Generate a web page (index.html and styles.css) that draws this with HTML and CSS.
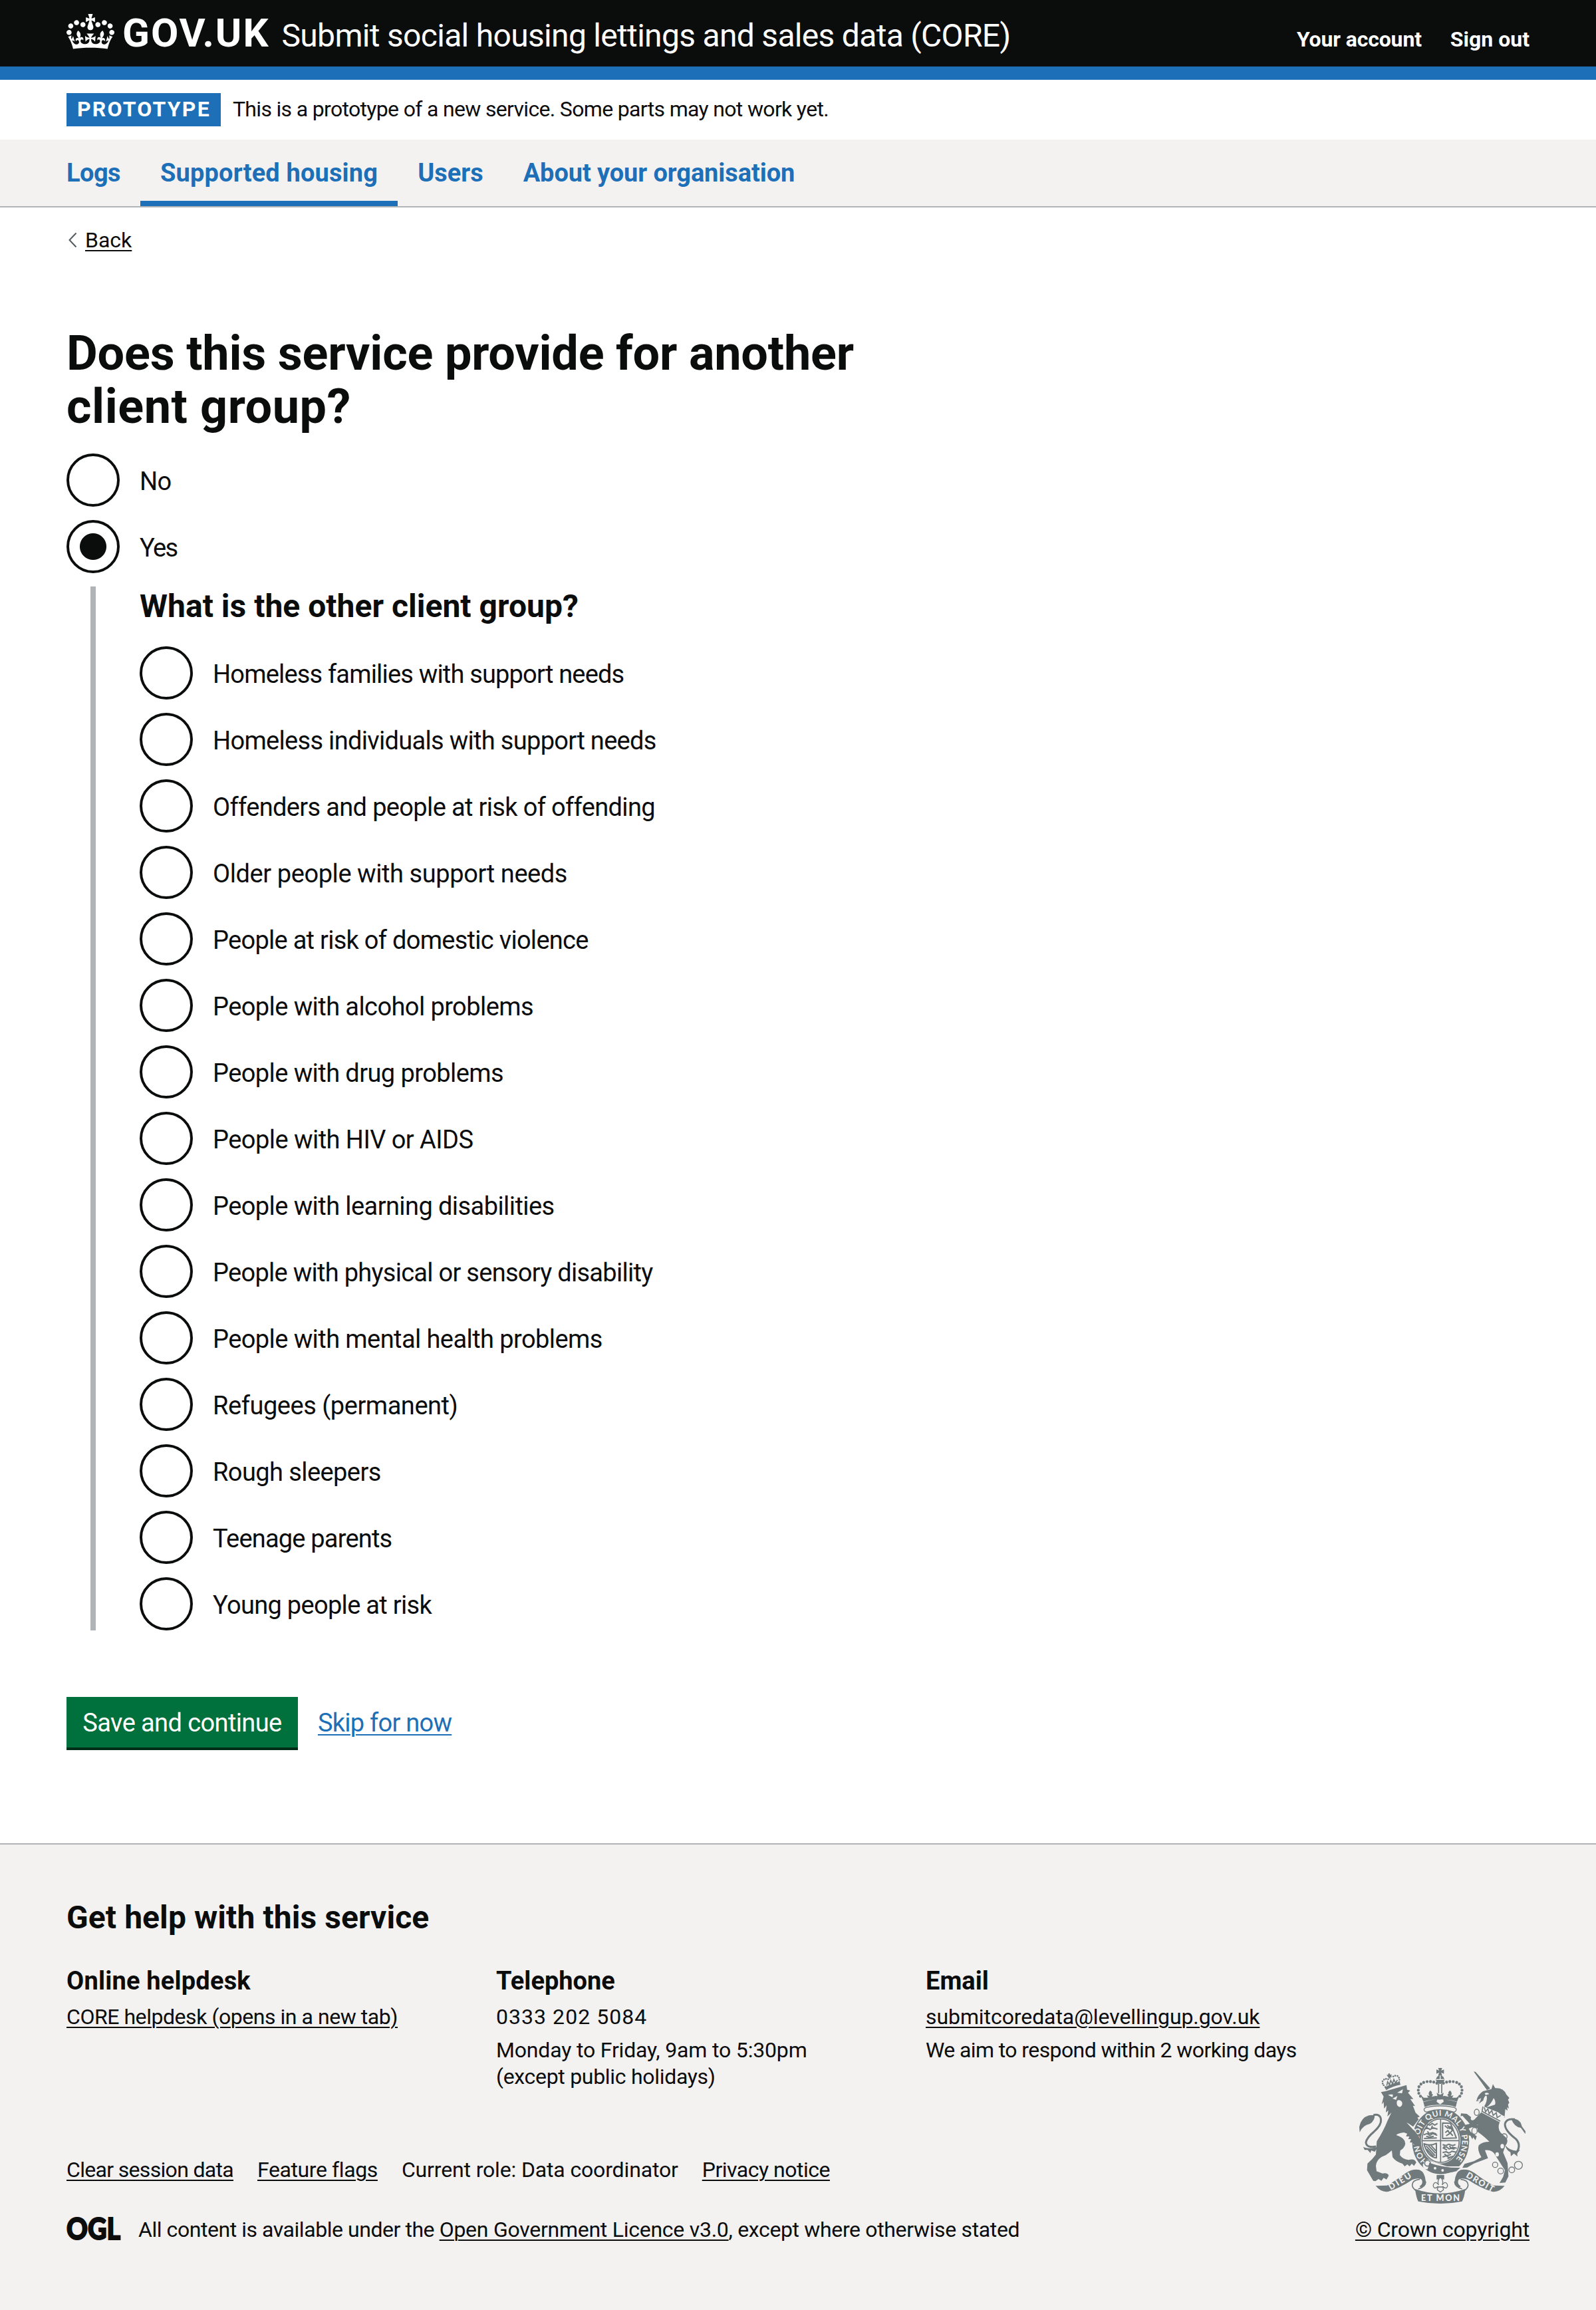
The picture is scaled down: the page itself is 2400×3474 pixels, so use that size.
FILE: index.html
```
<!DOCTYPE html>
<html lang="en">
<head>
<meta charset="utf-8">
<title>Does this service provide for another client group? - Submit social housing lettings and sales data (CORE)</title>
<link rel="stylesheet" href="styles.css">
</head>
<body>
<header class="header">
  <div class="header-inner">
    <svg class="crown" viewBox="0 0 132 97" aria-hidden="true"><path fill="currentColor" fill-rule="evenodd" d="M25 30.2c3.5 1.5 7.7-.2 9.1-3.7 1.5-3.6-.2-7.8-3.9-9.2-3.6-1.4-7.6.3-9.1 3.9-1.4 3.5.3 7.5 3.9 9zM9 39.5c3.6 1.5 7.8-.2 9.2-3.7 1.5-3.6-.2-7.8-3.9-9.1-3.6-1.5-7.6.2-9.1 3.8-1.4 3.5.3 7.5 3.8 9zM4.4 57.2c3.5 1.5 7.7-.2 9.1-3.8 1.5-3.6-.2-7.7-3.9-9.1-3.5-1.5-7.6.3-9.1 3.8-1.4 3.5.3 7.6 3.9 9.1zm38.3-21.4c3.5 1.5 7.7-.2 9.1-3.8 1.5-3.6-.2-7.7-3.9-9.1-3.6-1.5-7.6.3-9.1 3.8-1.3 3.6.4 7.7 3.9 9.1zm64.4-5.6c-3.6 1.5-7.8-.2-9.1-3.7-1.5-3.6.2-7.8 3.8-9.2 3.6-1.4 7.7.3 9.2 3.9 1.3 3.5-.4 7.5-3.9 9zm15.9 9.3c-3.6 1.5-7.7-.2-9.1-3.7-1.5-3.6.2-7.8 3.7-9.1 3.6-1.5 7.7.2 9.2 3.8 1.5 3.5-.3 7.5-3.8 9zm4.7 17.7c-3.6 1.5-7.8-.2-9.2-3.8-1.5-3.6.2-7.7 3.9-9.1 3.6-1.5 7.7.3 9.2 3.8 1.3 3.5-.4 7.6-3.9 9.1zM89.3 35.8c-3.6 1.5-7.8-.2-9.2-3.8-1.4-3.6.2-7.7 3.9-9.1 3.6-1.5 7.7.3 9.2 3.8 1.4 3.6-.3 7.7-3.9 9.1zM69.7 17.7l8.9 4.7V9.3l-8.9 2.8c-.2-.3-.5-.6-.9-.9L72.4 0H59.6l3.5 11.2c-.3.3-.6.5-.9.9l-8.8-2.8v13.1l8.8-4.7c.3.3.6.7.9.9l-5 15.4v.1c-.2.8-.4 1.6-.4 2.4 0 4.1 3.1 7.5 7 8.1h.2c.3 0 .7.1 1 .1.4 0 .7 0 1-.1h.2c4-.6 7.1-4.1 7.1-8.1 0-.8-.1-1.7-.4-2.4V34l-5.1-15.4c.4-.2.7-.6 1-.9zM66 92.8c16.9 0 32.8 1.1 47.1 3.2 4-16.9 8.9-26.7 14-33.5l-9.6-3.4c1 4.9 1.1 7.2 0 10.2-1.5-1.4-3-4.3-4.2-8.7L108.6 76c2.8-2 5-3.2 7.5-3.3-4.4 9.4-10 11.9-13.6 11.2-4.3-.8-6.3-4.6-5.6-7.9 1-4.7 5.7-5.9 8-.5 4.3-8.7-3-11.4-7.6-8.8 7.1-7.2 7.9-13.5 2.1-21.1-8 6.1-8.1 12.3-4.5 20.8-4.7-5.4-12.1-2.5-9.5 6.2 3.4-5.2 7.9-2 7.2 3.1-.6 4.3-6.4 7.8-13.5 7.2-10.3-.9-10.9-8-11.2-13.8 2.5-.5 7.1 1.8 11 7.3L80.2 60c-4.1 4.4-8 5.3-12.3 5.4 1.4-4.4 8-11.6 8-11.6H55.5s6.4 7.2 7.9 11.6c-4.2-.1-8-1-12.3-5.4l1.4 16.4c3.9-5.5 8.5-7.7 10.9-7.3-.3 5.8-.9 12.8-11.1 13.8-7.2.6-12.9-2.9-13.5-7.2-.7-5 3.8-8.3 7.1-3.1 2.7-8.7-4.6-11.6-9.4-6.2 3.7-8.5 3.6-14.7-4.6-20.8-5.8 7.6-5 13.9 2.2 21.1-4.7-2.6-11.9.1-7.7 8.8 2.3-5.5 7.1-4.2 8.1.5.7 3.3-1.3 7.1-5.7 7.9-3.5.7-9-1.8-13.5-11.2 2.5.1 4.7 1.3 7.5 3.3l-4.7-15.4c-1.2 4.4-2.7 7.2-4.3 8.7-1.1-3-.9-5.3 0-10.2l-9.5 3.4c5 6.9 9.9 16.7 14 33.5 14.8-2.1 30.8-3.2 47.7-3.2z"/></svg>
    <span class="logotype">GOV.UK</span>
    <span class="service-name">Submit social housing lettings and sales data (CORE)</span>
    <nav class="account"><a class="account-link">Your account</a><a>Sign out</a></nav>
  </div>
</header>

<div class="phase">
  <strong class="tag">PROTOTYPE</strong>
  <span class="phase-text">This is a prototype of a new service. Some parts may not work yet.</span>
</div>

<nav class="primary">
  <a class="nav-logs">Logs</a>
  <a class="nav-current">Supported housing</a>
  <a>Users</a>
  <a class="nav-about">About your organisation</a>
</nav>

<main class="main">
  <a class="back"><svg class="chevron" viewBox="0 0 14 24" aria-hidden="true"><path d="M12.5 1.5 2.5 12l10 10.5" fill="none" stroke="#505a5f" stroke-width="2"/></svg><span class="link">Back</span></a>
  <h1 class="title">Does this service provide for another <span class="title-end">client group?</span></h1>
  <div class="radios">
    <label class="radio"><i class="dot"></i><span class="text-no">No</span></label>
    <label class="radio"><i class="dot dot-on"></i><span class="text-yes">Yes</span></label>
  </div>
  <section class="conditional">
    <h2 class="heading">What is the other client group?</h2>
    <div class="radios groups">
      <label class="radio"><i class="dot"></i><span>Homeless families with support needs</span></label>
      <label class="radio"><i class="dot"></i><span>Homeless individuals with support needs</span></label>
      <label class="radio"><i class="dot"></i><span>Offenders and people at risk of offending</span></label>
      <label class="radio"><i class="dot"></i><span>Older people with support needs</span></label>
      <label class="radio"><i class="dot"></i><span>People at risk of domestic violence</span></label>
      <label class="radio"><i class="dot"></i><span>People with alcohol problems</span></label>
      <label class="radio"><i class="dot"></i><span>People with drug problems</span></label>
      <label class="radio"><i class="dot"></i><span>People with HIV or AIDS</span></label>
      <label class="radio"><i class="dot"></i><span>People with learning disabilities</span></label>
      <label class="radio"><i class="dot"></i><span>People with physical or sensory disability</span></label>
      <label class="radio"><i class="dot"></i><span>People with mental health problems</span></label>
      <label class="radio"><i class="dot"></i><span>Refugees (permanent)</span></label>
      <label class="radio"><i class="dot"></i><span>Rough sleepers</span></label>
      <label class="radio"><i class="dot"></i><span>Teenage parents</span></label>
      <label class="radio"><i class="dot"></i><span>Young people at risk</span></label>
    </div>
  </section>
  <div class="actions">
    <button class="button" type="button">Save and continue</button>
    <a class="link skip">Skip for now</a>
  </div>
</main>

<footer class="footer">
  <div class="footer-main">
    <h2 class="heading help">Get help with this service</h2>
    <div class="columns">
      <div>
        <h3 class="subheading online">Online helpdesk</h3>
        <p class="core"><a class="link">CORE helpdesk (opens in a new tab)</a></p>
      </div>
      <div>
        <h3 class="subheading">Telephone</h3>
        <p class="phone">0333 202 5084</p>
        <p class="hours">Monday to Friday, 9am to 5:30pm<br><span class="hours-note">(except public holidays)</span></p>
      </div>
      <div>
        <h3 class="subheading">Email</h3>
        <p class="email"><a class="link">submitcoredata@levellingup.gov.uk</a></p>
        <p class="respond">We aim to respond within 2 working days</p>
      </div>
    </div>
    <div class="meta-links">
      <a class="link meta-clear">Clear session data</a>
      <a class="link meta-flags">Feature flags</a>
      <span class="meta-role">Current role: Data coordinator</span>
      <a class="link meta-privacy">Privacy notice</a>
    </div>
    <div class="licence">
      <svg class="ogl" viewBox="0 0 84 40" aria-label="OGL"><text x="0" y="35" textLength="81" lengthAdjust="spacingAndGlyphs">OGL</text></svg>
      <p><span class="lic-a">All content is available under the </span><a class="link lic-b">Open Government Licence v3.0</a><span class="lic-c">, except where otherwise stated</span></p>
    </div>
  </div>
  <div class="copyright">
    <svg class="crest" viewBox="120 54 780 624" aria-hidden="true">
      <defs>
        <path id="garter" d="M443.4 483.6A97 114 0 1 1 554.6 483.6"/>
        <g id="ribbon">
          <path class="ink" d="M206 592l52-2q48-28 84-56 30-20 62-14 24 10 28 52 0 16-22 28l-6-6q18-12 10-30-12-10-42 0-60 40-110 54-32 4-56-26z"/>
          <path class="line" d="M405 562q-34 4-34 26 0 14 20 28M432 572q0 24-34 34"/>
        </g>
        <g id="crown-half">
          <path class="beads" d="M482 129q-20-10-46-7-28 4-36 26-6 24 10 42"/>
          <path class="ink" d="M499 182l-18-10 5 20-5 20 18 14zM452 162q-12 12-3 24l-12-2 6 10-20 0-14-12 12 30q36-10 78-10v-12l-22-4-18 4 6-10-6-4q4-8-7-14zM421 214q36-12 78-12v24q-42 0-72 10z"/>
        </g>
      </defs>

      <!-- Royal crown -->
      <path class="ink" d="M488 60h18l-4 12 12-5v19l-12-5 4 14h-18l4-14-12 5V67l12 5z"/>
      <circle class="ink" cx="497" cy="113" r="19"/>
      <path class="pale-line" d="M480 112h34M497 94v17"/>
      <path class="line" d="M490 132v42M504 132v42"/>
      <use href="#crown-half"/><use href="#crown-half" transform="matrix(-1 0 0 1 994 0)"/>

      <!-- Garter and shield -->
      <ellipse class="ink" cx="499" cy="391" rx="129" ry="148"/>
      <path class="cushion" d="M434 238q63-14 126 0 16 6 6 18-4 4-12 2-57-20-114 0-8 2-12-2-10-12 6-18z"/>
      <ellipse class="pale" cx="499" cy="388" rx="89" ry="103"/>
      <ellipse class="line" cx="499" cy="388" rx="84" ry="98"/>
      <path class="line" d="M499 290v196M415 388h168"/>
      <g class="charge">
        <path d="M435 312l16 6 10-8 12 8 12-8M425 338l14-8 12 8 14-8 20 6M422 362l16-6 12 8 14-8 20 8M424 378l58-2M438 322l-6 10 16 2M462 320l-4 12 18 0M440 346l6 10 18-4 16 6M434 368l14 4 20-4"/>
        <path d="M508 308l36 2 26 66-62 2zM518 320l14 12 10-8 10 18-10 10 12 14M520 352l12-10 8 14-16 10M530 318l12 18"/>
        <path d="M508 406l16 4 12-6 16 6 14-4M508 422l18-6 12 10 14-8 20 4M508 442l16-4 12 6 14-8 20 4M508 462l16-6 12 8 22-6M516 412l-4 10 16 8M540 410l4 12 18 4M516 448l10 8 20-6M530 470l14-6"/>
        <path d="M424 402q26 12 56-2v66q-36-4-54-56zM434 412l40 44M444 410l32 34M456 410l22 24M436 426l32 34"/>
      </g>
      <text class="motto ring"><textPath href="#garter" textLength="525">HONI SOIT QUI MAL Y PENSE</textPath></text>
      <path class="pale" d="M424 488q16-24 30-8l74 24 74 0-32 26-142-14q-16-12-4-28z"/>
      <path class="ink" d="M448 488q70 24 140 22l-18 16q-60 20-130-6z"/>
      <circle class="line" cx="440" cy="490" r="13"/>
      <circle class="pale" cx="474" cy="512" r="6"/><circle class="pale" cx="508" cy="522" r="6"/>

      <!-- Lion -->
      <path class="ink" d="M250 165l95-28 3 21 14 4-10 10 24 28-14 0 22 32-10-2 12 32 19 18-11 4 6 8-25 33-30-20 27 30q36 32 38 66l-7 15-10-10-10 5-10-15-13 0 6-15-13 0 5-12-15 0 5-13-15-5q-30 4-34 12 30 10 38 26 10 24-20 44l-2 20q14 20 40 22 28-8 34 12l-10 15-10-10-10 12-10-9-12 9-10-12q-32-10-45-30l-3-30q-14 12-28 22-40 12-44 48l3 24 27 10q24-4 28 10l-10 17-13-7-10 13-13-8-14 10-10-2-28-48 2-30q24-20 38-40l4-60q32-50 48-92l18-38-18 18 4-28-11 10 3-32-11 15-2-30-9 10 9-35-12-20z"/>
      <path class="pale" d="M303 208q12-8 22 6 4 18-10 22-14-2-14-20zM303 172l26-16-4 18zM262 182q10-4 22-2l-2 12zM282 198l22-12-6 18zM348 308q30 14 42 40l-10-6q-12-20-32-34z"/>
      <path class="ink" d="M246 148q34-20 68-26l4 14q-34 6-64 24zM260 98l-5-7 7 1 0-6 8-2 1 7 8-2-3 8 4 4-8 1 1 8-7-4z"/>
      <path class="beads small" d="M250 146q-18-16-12-28 10-14 28-6M312 124q4-20-8-28-16-4-24 8"/>
      <path class="line" d="M256 140l4-18 8 14 6-20 8 16 6-20 8 16 8-14"/>
      <path class="line tail" d="M208 414q-44 8-46-18 4-22 36-48 34-30 32-54-2-28-34-22"/>
      <path class="ink" d="M134 350l-2-24q8-42 44-52l26-2q0 26-22 40-34 8-46 38zM150 416q20 12 66 0l-14 22-16-6-4 12-12-14-14 0z"/>

      <!-- Unicorn -->
      <path class="ink" d="M648 76l9 2 66 74-15 8zM662 205q3-22 28-40l38-10 7-22 10 18q38-2 50 28l14 16-6 8 6 14-6 8 4 18-8-6 2 16-10-8-4 40-10-8-16-16-66-26q16-26 12-48-8-8-16 20l-20 14 8-14-20 4z"/>
      <path class="pale" d="M698 174q14-6 20 4l-16 4zM738 196q12 16 6 30l-38 12q22-16 32-42zM664 206l18-10-4 12z"/>
      <path class="ink" d="M684 258l82 44q-12 30 4 50l25 23q12 16-4 36l-10 30 20 48 4 60-14 28-26 2 16-28 8-30-44-68q-12-26-46-22l14 36-64 24-30 18-22 2 10-18 42-12 34-18q-20-32-12-54 16-16 48-16-20-22-54-46l2-32-30 4-40-44-8 4 2-14 26 2 34 26z"/>
      <path class="ink" d="M604 318l36-8 32 8-2 16-30-6-14 6 8 14 28 20-6 18-10-14-4 10-8-16-14-4-4-16z"/>
      <path class="pale" d="M690 232l98 46-16 30-90-48z"/>
      <path class="line" d="M690 234l-4 22 82 44M696 238l6 20 10-14 6 22 12-14 6 22 14-12 4 22 16-10"/>
      <path class="line tail" d="M838 448q28-40 0-68-54-42-48-70 8-24 44-18"/>
      <path class="ink" d="M818 290q40-4 48 34l16 22-1 12-20-28q-30-4-43-40zM790 408q30 34 68 22l-14 14 2 16-16-14-14 12-2-18q-18-8-24-32z"/>
      <g class="chain">
        <ellipse cx="662" cy="260" rx="11" ry="14"/><ellipse cx="652" cy="344" rx="12" ry="15"/><circle cx="786" cy="370" r="13"/><circle cx="745" cy="497" r="12"/><circle cx="770" cy="525" r="13"/><circle cx="820" cy="520" r="13"/><circle cx="850" cy="499" r="18"/>
      </g>
      <ellipse class="pale" cx="777" cy="413" rx="8" ry="10"/><ellipse class="pale" cx="754" cy="450" rx="8" ry="10"/><ellipse class="pale" cx="643" cy="288" rx="8" ry="8"/>

      <!-- Motto scroll -->
      <use href="#ribbon"/><use href="#ribbon" transform="matrix(-1 0 0 1 994 0)"/>
      <path class="ink" d="M384 606q113 40 226 0-2 32-14 56-99 20-198 0-10-20-14-56z"/>
      <text class="motto" x="274" y="611" transform="rotate(-31 274 611)" textLength="112">DIEU</text>
      <text class="motto" x="411" y="661" textLength="174">ET MON</text>
      <text class="motto" x="611" y="551" transform="rotate(30 611 551)" textLength="138">DROIT</text>
      <path class="ink" d="M481 543h34v20h-34z"/>
      <path class="fleur" d="M498 552q-16 16-8 36-10-16-20-8-10 12 2 22 10 0 16-8l-4 16 14 10 14-10-4-16q6 8 16 8 12-10 2-22-10-8-20 8 8-20-8-36z"/>
      <path class="line" d="M484 597h28"/>
    </svg>
    <a class="link">© Crown copyright</a>
  </div>
</footer>
</body>
</html>
```
FILE: styles.css
```
*{box-sizing:border-box}
body{margin:0;background:#fff;color:#0b0c0c;font:400 32px/40px Roboto,"Noto Sans",sans-serif}
h1,h2,h3,p{margin:0}
.link{text-decoration:underline;text-decoration-thickness:2px;text-underline-offset:4px}

.header{height:120px;background:#0b0c0c;border-bottom:20px solid #1d70b8;color:#fff}
.header-inner{display:flex;align-items:baseline;padding:20px 100px 0}
.crown{width:72px;height:53px;margin:1px 12px 0 0;align-self:flex-start}
.logotype{font-size:60px;line-height:60px;font-weight:700;letter-spacing:2px}
.service-name{margin-left:18px;font-size:48px;line-height:60px;letter-spacing:-.69px}
.account{display:flex;gap:43px;margin-left:auto;font-weight:700}
.account-link{letter-spacing:-.15px}

.phase{height:90px;padding:20px 100px;display:flex;align-items:baseline;gap:18px}
.tag{height:50px;padding:0 15px 0 16px;background:#1d70b8;color:#fff;line-height:48px;font-weight:700;letter-spacing:2.2px}
.phase-text{letter-spacing:-.67px}

.primary{height:102px;padding:0 100px;display:flex;gap:60px;background:#f3f2f1;border-bottom:2px solid #b1b4b6;color:#1d70b8;font-size:38px;line-height:50px;font-weight:700}
.primary a{padding-top:25px}
.nav-logs{letter-spacing:-.55px}
.nav-about{letter-spacing:-.1px}
.primary .nav-current{margin:0 -30px;padding:25px 30px 0;border-bottom:8px solid #1d70b8;letter-spacing:.15px}

.main{padding:29px 100px 140px}
.back{display:flex;align-items:center;gap:12px}
.chevron{width:14px;height:24px;margin-left:2px}
.title{max-width:1300px;margin:111px 0 30px;font-size:72px;line-height:80px;font-weight:700;letter-spacing:-.2px}
.title-end{letter-spacing:.55px}
.radios{display:grid;gap:20px}
.radio{display:flex;align-items:center;gap:30px;height:80px;font-size:38px;line-height:50px}
.radio span{padding-top:3px}
.dot{width:80px;height:80px;border:4px solid #0b0c0c;border-radius:50%}
.dot-on{background:radial-gradient(circle,#0b0c0c 19.5px,transparent 20.5px)}
.text-no{letter-spacing:-.5px}
.text-yes{letter-spacing:-1.6px}
.conditional{margin:20px 0 0 36px;padding-left:66px;border-left:8px solid #b1b4b6}
.heading{font-size:48px;line-height:60px;font-weight:700;letter-spacing:.02px}
.conditional .heading{margin-bottom:30px}
.groups{letter-spacing:-.58px}
.groups .radio:nth-child(1){letter-spacing:-.82px}
.groups .radio:nth-child(2){letter-spacing:-.69px}
.groups .radio:nth-child(3){letter-spacing:-.65px}
.groups .radio:nth-child(4){letter-spacing:-.42px}
.groups .radio:nth-child(5){letter-spacing:-.72px}
.groups .radio:nth-child(8){letter-spacing:-.54px}
.groups .radio:nth-child(10){letter-spacing:-.72px}
.groups .radio:nth-child(12){letter-spacing:-.46px}
.groups .radio:nth-child(14){letter-spacing:-.8px}
.groups .radio:nth-child(15){letter-spacing:-.69px}
.actions{display:flex;align-items:baseline;gap:30px;margin-top:100px;height:80px;font-size:38px;line-height:50px}
.button{width:348px;height:76px;padding:2px 0 0;border:0;background:#00703c;box-shadow:0 4px 0 #002d18;color:#fff;font:400 38px/50px Roboto,"Noto Sans",sans-serif;letter-spacing:-.6px}
.skip{color:#1d70b8;letter-spacing:-.75px}

.footer{display:flex;justify-content:space-between;align-items:flex-end;padding:80px 100px 101px;background:#f3f2f1;border-top:2px solid #b1b4b6}
.help{margin-bottom:40px;letter-spacing:.08px}
.columns{display:grid;grid-template-columns:repeat(3,586px);gap:60px;height:230px}
.subheading{margin-bottom:9px;font-size:38px;line-height:50px;font-weight:700}
.online{letter-spacing:.2px}
.columns p{margin-bottom:10px}
.core{letter-spacing:-.45px}
.phone{letter-spacing:1.05px}
.hours{letter-spacing:-.17px}
.hours-note{letter-spacing:-.3px}
.email{letter-spacing:-.08px}
.respond{letter-spacing:-.6px}
.meta-links{display:flex;gap:36px;margin:59px 0 50px}
.meta-clear{letter-spacing:-.68px}
.meta-flags{letter-spacing:-.4px}
.meta-role{letter-spacing:-.15px}
.meta-privacy{letter-spacing:-.5px}
.licence{display:flex;gap:24px}
.licence p{white-space:nowrap}
.lic-a{letter-spacing:-.45px}
.lic-b{letter-spacing:-.26px}
.lic-c{letter-spacing:-.35px}
.ogl{width:84px;height:40px;overflow:visible}
.ogl text{font:900 45px Lato,sans-serif;fill:#0b0c0c;stroke:#0b0c0c;stroke-width:2}
.copyright{display:flex;flex-direction:column;align-items:flex-end;gap:17px;white-space:nowrap;letter-spacing:-.17px}
.crest{width:260px;height:208px}
.ink{fill:#707a7c}
.pale{fill:#f3f2f1}
.line{fill:none;stroke:#707a7c;stroke-width:5}
.fleur,.cushion{fill:#f3f2f1;stroke:#707a7c;stroke-width:4}
.tail{stroke-width:9}
.pale-line{stroke:#f3f2f1;stroke-width:4}
.beads{fill:none;stroke:#707a7c;stroke-width:13;stroke-linecap:round;stroke-dasharray:0 15}
.beads.small{stroke-width:8;stroke-dasharray:0 10}
.charge{fill:none;stroke:#707a7c;stroke-width:6;stroke-linejoin:round}
.chain{fill:none;stroke:#707a7c;stroke-width:4}
.motto{font:900 38px Lato,sans-serif;fill:#f3f2f1}
.motto.ring{font-size:36px;font-weight:700}
```
